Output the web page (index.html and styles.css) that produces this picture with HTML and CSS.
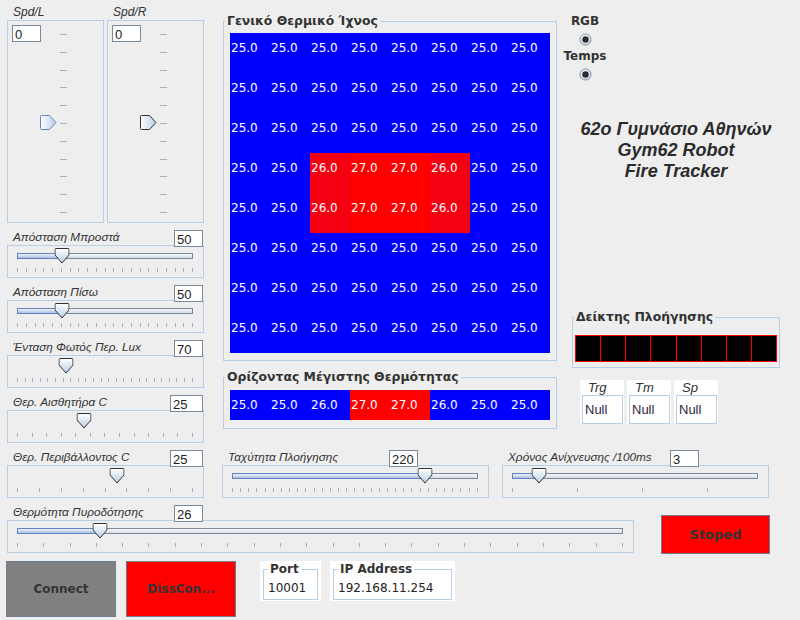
FILE: index.html
```html
<!DOCTYPE html>
<html lang="el">
<head>
<meta charset="utf-8">
<title>Gym62 Robot Fire Tracker</title>
<link rel="stylesheet" href="styles.css">
</head>
<body>
<svg class="defs" width="0" height="0" aria-hidden="true">
  <defs>
    <linearGradient id="gv" x1="0" y1="0" x2="0" y2="1">
      <stop offset="0" stop-color="#ffffff"/>
      <stop offset="1" stop-color="#b9cde9"/>
    </linearGradient>
    <linearGradient id="gh" x1="0" y1="0" x2="1" y2="0">
      <stop offset="0" stop-color="#ffffff"/>
      <stop offset="1" stop-color="#b9cde9"/>
    </linearGradient>
    <linearGradient id="gr" x1="0" y1="0" x2="1" y2="1">
      <stop offset="0" stop-color="#ffffff"/>
      <stop offset="1" stop-color="#c3d2e4"/>
    </linearGradient>
  </defs>
</svg>

<div class="app">
  <div class="top">
    <div class="left">
      <div class="spd-pair">
        <div class="vs">
          <div class="vs-label">Spd/L</div>
          <div class="vs-box">
            <span class="field">0</span>
            <div class="vrail"><i></i><i></i><i></i><i></i><i></i><i></i><i></i><i></i><i></i><i></i><i></i></div>
            <svg class="vthumb" style="top:94px" width="17" height="16" viewBox="0 0 17 16"><path d="M1.5 0.5H9.5L16 7.5L9.5 14.5H1.5Q0.5 14.5 0.5 13.5V1.5Q0.5 0.5 1.5 0.5Z" fill="url(#gh)" stroke="#6382bf"/></svg>
          </div>
        </div>
        <div class="vs">
          <div class="vs-label">Spd/R</div>
          <div class="vs-box">
            <span class="field">0</span>
            <div class="vrail"><i></i><i></i><i></i><i></i><i></i><i></i><i></i><i></i><i></i><i></i><i></i></div>
            <svg class="vthumb" style="top:94px" width="17" height="16" viewBox="0 0 17 16"><path d="M1.5 0.5H9.5L16 7.5L9.5 14.5H1.5Q0.5 14.5 0.5 13.5V1.5Q0.5 0.5 1.5 0.5Z" fill="url(#gh)" stroke="#333"/></svg>
          </div>
        </div>
      </div>

      <div class="hs w197">
        <div class="hs-head"><span class="hs-label">Απόσταση Μπροστά</span><span class="field">50</span></div>
        <div class="hs-box">
          <div class="rail">
            <div class="track"><div class="fill" style="width:25.3%"></div></div>
            <svg class="hthumb" style="left:25.3%" width="15" height="16" viewBox="0 0 15 16"><path d="M1.5 0.5H13.5Q14.5 0.5 14.5 1.5V7L7.5 15L0.5 7V1.5Q0.5 0.5 1.5 0.5Z" fill="url(#gv)" stroke="#333"/></svg>
          </div>
          <div class="hticks"><i></i><i></i><i></i><i></i><i></i><i></i><i></i><i></i><i></i><i></i><i></i><i></i><i></i><i></i><i></i><i></i><i></i><i></i><i></i><i></i><i></i></div>
        </div>
      </div>

      <div class="hs w197">
        <div class="hs-head"><span class="hs-label">Απόσταση Πίσω</span><span class="field">50</span></div>
        <div class="hs-box">
          <div class="rail">
            <div class="track"><div class="fill" style="width:25.3%"></div></div>
            <svg class="hthumb" style="left:25.3%" width="15" height="16" viewBox="0 0 15 16"><path d="M1.5 0.5H13.5Q14.5 0.5 14.5 1.5V7L7.5 15L0.5 7V1.5Q0.5 0.5 1.5 0.5Z" fill="url(#gv)" stroke="#333"/></svg>
          </div>
          <div class="hticks"><i></i><i></i><i></i><i></i><i></i><i></i><i></i><i></i><i></i><i></i><i></i><i></i><i></i><i></i><i></i><i></i><i></i><i></i><i></i><i></i><i></i></div>
        </div>
      </div>

      <div class="hs w197">
        <div class="hs-head"><span class="hs-label">Ένταση Φωτός Περ. Lux</span><span class="field">70</span></div>
        <div class="hs-box">
          <div class="rail notrack">
            <div class="track"></div>
            <svg class="hthumb" style="left:27.6%" width="15" height="16" viewBox="0 0 15 16"><path d="M1.5 0.5H13.5Q14.5 0.5 14.5 1.5V7L7.5 15L0.5 7V1.5Q0.5 0.5 1.5 0.5Z" fill="url(#gv)" stroke="#333"/></svg>
          </div>
          <div class="hticks"><i></i><i></i><i></i><i></i><i></i><i></i><i></i><i></i><i></i><i></i><i></i><i></i><i></i><i></i><i></i><i></i><i></i><i></i><i></i><i></i><i></i><i></i><i></i><i></i></div>
        </div>
      </div>

      <div class="hs w197">
        <div class="hs-head"><span class="hs-label">Θερ. Αισθητήρα C</span><span class="field wide">25</span></div>
        <div class="hs-box">
          <div class="rail notrack">
            <div class="track"></div>
            <svg class="hthumb" style="left:37.8%" width="15" height="16" viewBox="0 0 15 16"><path d="M1.5 0.5H13.5Q14.5 0.5 14.5 1.5V7L7.5 15L0.5 7V1.5Q0.5 0.5 1.5 0.5Z" fill="url(#gv)" stroke="#333"/></svg>
          </div>
          <div class="hticks"><i></i><i></i><i></i><i></i><i></i><i></i><i></i><i></i><i></i><i></i><i></i><i></i><i></i></div>
        </div>
      </div>

      <div class="hs w197">
        <div class="hs-head"><span class="hs-label">Θερ. Περιβάλλοντος C</span><span class="field wide">25</span></div>
        <div class="hs-box">
          <div class="rail notrack">
            <div class="track"></div>
            <svg class="hthumb" style="left:56.8%" width="15" height="16" viewBox="0 0 15 16"><path d="M1.5 0.5H13.5Q14.5 0.5 14.5 1.5V7L7.5 15L0.5 7V1.5Q0.5 0.5 1.5 0.5Z" fill="url(#gv)" stroke="#333"/></svg>
          </div>
          <div class="hticks"><i></i><i></i><i></i><i></i><i></i><i></i><i></i><i></i><i></i></div>
        </div>
      </div>
    </div>

    <div class="right">
      <div class="upper">
        <div class="mid">
          <div class="tbox thermal">
            <span class="tbox-title">Γενικό Θερμικό Ίχνος</span>
            <div class="grid">
              <span class="c">25.0</span><span class="c">25.0</span><span class="c">25.0</span><span class="c">25.0</span><span class="c">25.0</span><span class="c">25.0</span><span class="c">25.0</span><span class="c">25.0</span>
              <span class="c">25.0</span><span class="c">25.0</span><span class="c">25.0</span><span class="c">25.0</span><span class="c">25.0</span><span class="c">25.0</span><span class="c">25.0</span><span class="c">25.0</span>
              <span class="c">25.0</span><span class="c">25.0</span><span class="c">25.0</span><span class="c">25.0</span><span class="c">25.0</span><span class="c">25.0</span><span class="c">25.0</span><span class="c">25.0</span>
              <span class="c">25.0</span><span class="c">25.0</span><span class="c r2">26.0</span><span class="c r">27.0</span><span class="c r">27.0</span><span class="c r2">26.0</span><span class="c">25.0</span><span class="c">25.0</span>
              <span class="c">25.0</span><span class="c">25.0</span><span class="c r2">26.0</span><span class="c r">27.0</span><span class="c r">27.0</span><span class="c r2">26.0</span><span class="c">25.0</span><span class="c">25.0</span>
              <span class="c">25.0</span><span class="c">25.0</span><span class="c">25.0</span><span class="c">25.0</span><span class="c">25.0</span><span class="c">25.0</span><span class="c">25.0</span><span class="c">25.0</span>
              <span class="c">25.0</span><span class="c">25.0</span><span class="c">25.0</span><span class="c">25.0</span><span class="c">25.0</span><span class="c">25.0</span><span class="c">25.0</span><span class="c">25.0</span>
              <span class="c">25.0</span><span class="c">25.0</span><span class="c">25.0</span><span class="c">25.0</span><span class="c">25.0</span><span class="c">25.0</span><span class="c">25.0</span><span class="c">25.0</span>
            </div>
          </div>
          <div class="tbox horizon">
            <span class="tbox-title">Ορίζοντας Μέγιστης Θερμότητας</span>
            <div class="hrow">
              <span class="c">25.0</span><span class="c">25.0</span><span class="c">26.0</span><span class="c r">27.0</span><span class="c r">27.0</span><span class="c">26.0</span><span class="c">25.0</span><span class="c">25.0</span>
            </div>
          </div>
        </div>

        <div class="side">
          <div class="radios">
            <span>RGB</span>
            <svg class="radio" width="13" height="13" viewBox="0 0 13 13"><circle cx="6.5" cy="6.5" r="5.5" fill="url(#gr)" stroke="#7f91a6"/><circle cx="6.5" cy="6.5" r="3.2" fill="#2d2d2d"/></svg>
            <span class="temps">Temps</span>
            <svg class="radio" width="13" height="13" viewBox="0 0 13 13"><circle cx="6.5" cy="6.5" r="5.5" fill="url(#gr)" stroke="#7f91a6"/><circle cx="6.5" cy="6.5" r="3.2" fill="#2d2d2d"/></svg>
          </div>
          <div class="brand">62ο Γυμνάσιο Αθηνών<br>Gym62 Robot<br>Fire Tracker</div>
          <div class="tbox nav">
            <span class="tbox-title">Δείκτης Πλοήγησης</span>
            <div class="navbar"><i></i><i></i><i></i><i></i><i></i><i></i><i></i><i></i></div>
          </div>
          <div class="trio">
            <div class="tri"><div class="tri-label">Trg</div><div class="tri-field">Null</div></div>
            <div class="tri"><div class="tri-label">Tm</div><div class="tri-field">Null</div></div>
            <div class="tri"><div class="tri-label">Sp</div><div class="tri-field">Null</div></div>
          </div>
        </div>
      </div>

      <div class="speed-row">
        <div class="hs w267">
          <div class="hs-head"><span class="hs-label">Ταχύτητα Πλοήγησης</span><span class="field f-speed">220</span></div>
          <div class="hs-box">
            <div class="rail">
              <div class="track"><div class="fill" style="width:78.3%"></div></div>
              <svg class="hthumb" style="left:78.3%" width="15" height="16" viewBox="0 0 15 16"><path d="M1.5 0.5H13.5Q14.5 0.5 14.5 1.5V7L7.5 15L0.5 7V1.5Q0.5 0.5 1.5 0.5Z" fill="url(#gv)" stroke="#333"/></svg>
            </div>
            <div class="hticks"><i></i><i></i><i></i><i></i><i></i><i></i><i></i><i></i><i></i><i></i><i></i><i></i><i></i><i></i><i></i><i></i><i></i><i></i><i></i><i></i><i></i><i></i><i></i><i></i><i></i><i></i><i></i><i></i><i></i><i></i><i></i></div>
          </div>
        </div>
        <div class="hs w267">
          <div class="hs-head"><span class="hs-label">Χρόνος Ανίχνευσης /100ms</span><span class="field f-time">3</span></div>
          <div class="hs-box">
            <div class="rail">
              <div class="track"><div class="fill" style="width:11%"></div></div>
              <svg class="hthumb" style="left:11%" width="15" height="16" viewBox="0 0 15 16"><path d="M1.5 0.5H13.5Q14.5 0.5 14.5 1.5V7L7.5 15L0.5 7V1.5Q0.5 0.5 1.5 0.5Z" fill="url(#gv)" stroke="#333"/></svg>
            </div>
            <div class="hticks fixed"><i></i><i></i><i></i><i></i></div>
          </div>
        </div>
      </div>
    </div>
  </div>

  <div class="fire-row">
    <div class="hs w627">
      <div class="hs-head"><span class="hs-label">Θερμότητα Πυροδότησης</span><span class="field f-fire">26</span></div>
      <div class="hs-box">
        <div class="rail">
          <div class="track"><div class="fill" style="width:13.7%"></div></div>
          <svg class="hthumb" style="left:13.7%" width="15" height="16" viewBox="0 0 15 16"><path d="M1.5 0.5H13.5Q14.5 0.5 14.5 1.5V7L7.5 15L0.5 7V1.5Q0.5 0.5 1.5 0.5Z" fill="url(#gv)" stroke="#333"/></svg>
        </div>
        <div class="hticks"><i></i><i></i><i></i><i></i><i></i><i></i><i></i><i></i><i></i><i></i><i></i><i></i><i></i><i></i><i></i><i></i><i></i><i></i><i></i><i></i><i></i><i></i><i></i><i></i></div>
      </div>
    </div>
    <div class="btn red stop">Stoped</div>
  </div>

  <div class="bottom-row">
    <div class="btn grey big">Connect</div>
    <div class="btn red big dis">DissCon...</div>
    <div class="netbox port">
      <div class="tbox">
        <span class="tbox-title">Port</span>
        <div class="net-val">10001</div>
      </div>
    </div>
    <div class="netbox ip">
      <div class="tbox">
        <span class="tbox-title">IP Address</span>
        <div class="net-val">192.168.11.254</div>
      </div>
    </div>
  </div>
</div>
</body>
</html>
```

FILE: styles.css
```css
* { box-sizing: border-box; }

html, body {
  margin: 0;
  padding: 0;
}

body {
  width: 800px;
  height: 620px;
  overflow: hidden;
  background: #eeeeee;
  color: #333333;
  font-family: "DejaVu Sans", sans-serif;
}

.defs {
  display: block;
  width: 0;
  height: 0;
  overflow: hidden;
}

.app {
  padding-left: 7px;
}

.top {
  display: flex;
  align-items: flex-start;
}

/* ---------- left column ---------- */
.left {
  width: 197px;
  flex: none;
}

.spd-pair {
  display: flex;
  gap: 3px;
}

.vs {
  width: 97px;
}

.vs-label {
  height: 20px;
  padding: 5px 0 0 6px;
  font: italic 12px/14px "Liberation Sans", Arial, sans-serif;
}

.vs-box {
  position: relative;
  height: 203px;
  border: 1px solid #b8cfe5;
  display: flex;
  align-items: flex-start;
  padding: 4px 0 0 4px;
}

.field {
  display: block;
  flex: none;
  width: 29px;
  height: 17px;
  background: #ffffff;
  border: 1px solid #7a8a99;
  padding-left: 2px;
  overflow: hidden;
  font: 13px/17px "Liberation Sans", Arial, sans-serif;
  color: #222;
}

.field.wide {
  width: 33px;
}

.vrail {
  margin: 9px 0 0 19px;
  width: 7px;
  height: 179px;
  display: flex;
  flex-direction: column;
  justify-content: space-between;
}

.vrail i {
  display: block;
  height: 1px;
  background: #a3b4c8;
}

.vthumb {
  position: absolute;
  left: 32px;
  display: block;
}

/* ---------- horizontal slider ---------- */
.hs {
  margin-top: 7px;
  flex: none;
}

.w197 { width: 197px; }
.w267 { width: 267px; }
.w627 { width: 627px; }

.hs-head {
  display: flex;
  align-items: flex-start;
  height: 15px;
}

.hs-label {
  flex: 1;
  padding-left: 6px;
  white-space: nowrap;
  font: italic 11.8px/15px "Liberation Sans", Arial, sans-serif;
}

.hs-head .field {
  position: relative;
  z-index: 1;
  margin-right: 1px;
}

.hs-head .f-speed { margin-right: 71px; }
.hs-head .f-time { margin-right: 70px; }
.hs-head .f-fire { margin-right: 431px; }

.hs-box {
  height: 33px;
  border: 1px solid #b8cfe5;
  padding: 7px 10px 0 9px;
}

.rail {
  position: relative;
  height: 6px;
}

.track {
  position: relative;
  height: 6px;
  border: 1px solid #7a8a99;
  background: linear-gradient(#f6f7f9, #d7dce2);
}

.rail.notrack .track {
  visibility: hidden;
}

.fill {
  position: absolute;
  left: -1px;
  top: -1px;
  bottom: -1px;
  border: 1px solid #6382bf;
  background: linear-gradient(#eef3fa, #a9c0e0);
}

.hthumb {
  position: absolute;
  top: -5px;
  display: block;
  transform: translateX(-50%);
}

.hticks {
  margin-top: 9px;
  height: 4px;
  display: flex;
  justify-content: space-between;
}

.hticks i {
  display: block;
  width: 1px;
  height: 4px;
  background: #a3b4c8;
}

.hticks.fixed {
  justify-content: flex-start;
  gap: 64px;
}

/* ---------- titled boxes ---------- */
.tbox {
  position: relative;
  border: 1px solid #b8cfe5;
}

.tbox-title {
  position: absolute;
  top: -8px;
  left: 1px;
  padding: 0 2px;
  background: #eeeeee;
  white-space: nowrap;
  font: bold 12.4px/14px "DejaVu Sans", sans-serif;
  color: #333333;
}

/* ---------- right area ---------- */
.right {
  margin-left: 19px;
  width: 577px;
  flex: none;
}

.upper {
  display: flex;
  align-items: flex-start;
}

.mid {
  width: 334px;
  flex: none;
}

.thermal {
  margin-top: 21px;
  height: 340px;
  padding: 11px 0 0 6px;
}

.grid {
  display: grid;
  grid-template-columns: repeat(8, 40px);
  grid-auto-rows: 40px;
  width: 320px;
}

.c {
  display: block;
  background: #0000ff;
  color: #ffffff;
  padding: 8px 0 0 1px;
  font: 12px/14px "DejaVu Sans", sans-serif;
  white-space: nowrap;
}

.c.r { background: #ff0000; }
.c.r2 { background: #f40012; }

.horizon {
  margin-top: 16px;
  height: 52px;
  padding: 12px 0 0 6px;
}

.hrow {
  display: grid;
  grid-template-columns: repeat(8, 40px);
  height: 30px;
}

.side {
  width: 243px;
  flex: none;
}

.radios {
  width: 56px;
  padding-top: 14px;
  display: flex;
  flex-direction: column;
  align-items: center;
  font: bold 12px/14px "DejaVu Sans", sans-serif;
}

.radio {
  display: block;
  margin-top: 5px;
}

.radios .temps {
  margin-top: 3px;
}

.brand {
  margin-top: 38px;
  width: 238px;
  text-align: center;
  font: italic bold 18px/21px "Liberation Sans", Arial, sans-serif;
  color: #2b2b2b;
}

.nav {
  margin: 135px 0 0 15px;
  width: 208px;
  height: 51px;
  padding: 17px 0 0 2px;
}

.navbar {
  width: 202px;
  height: 27px;
  border: 1px solid #ff0000;
  background: #000000;
  display: flex;
}

.navbar i {
  flex: 1;
  border-right: 1px solid #ff0000;
}

.navbar i:last-child {
  border-right: 0;
}

.trio {
  display: flex;
  gap: 3px;
  margin: 12px 0 0 23px;
}

.tri {
  width: 44px;
  height: 44px;
  background: #ffffff;
  padding: 1px 0 0 2px;
}

.tri-label {
  height: 14px;
  padding-left: 6px;
  font: italic 13px/14px "Liberation Sans", Arial, sans-serif;
}

.tri-field {
  width: 41px;
  height: 29px;
  border: 1px solid #b8cfe5;
  padding-left: 2px;
  font: 13px/27px "Liberation Sans", Arial, sans-serif;
  color: #2e2440;
}

.speed-row {
  display: flex;
  gap: 13px;
  margin: 14px 0 0 -1px;
}

/* ---------- bottom ---------- */
.fire-row {
  display: flex;
  align-items: flex-start;
}

.btn {
  display: flex;
  align-items: center;
  justify-content: center;
  border: 1px solid #6f7e8e;
  font: bold 12px/14px "DejaVu Sans", sans-serif;
  color: #333333;
}

.btn.red { background: #ff0000; }
.btn.grey { background: #808080; }

.stop {
  margin: 17px 0 0 27px;
  width: 109px;
  height: 39px;
  font-size: 13px;
}

.bottom-row {
  display: flex;
  align-items: flex-start;
  margin: 7px 0 0 -1px;
}

.big {
  width: 110px;
  height: 56px;
}

.dis {
  margin-left: 10px;
}

.netbox {
  background: #ffffff;
  height: 40px;
  padding: 8px 3px 1px 3px;
}

.netbox .tbox {
  height: 31px;
  padding: 11px 0 0 4px;
}

.netbox .tbox-title {
  left: 4px;
  font-size: 12px;
  background: #ffffff;
}

.port {
  width: 61px;
  margin-left: 24px;
}

.ip {
  width: 125px;
  margin-left: 9px;
}

.net-val {
  font: 12px/14px "DejaVu Sans", sans-serif;
  color: #222;
  white-space: nowrap;
}
```
